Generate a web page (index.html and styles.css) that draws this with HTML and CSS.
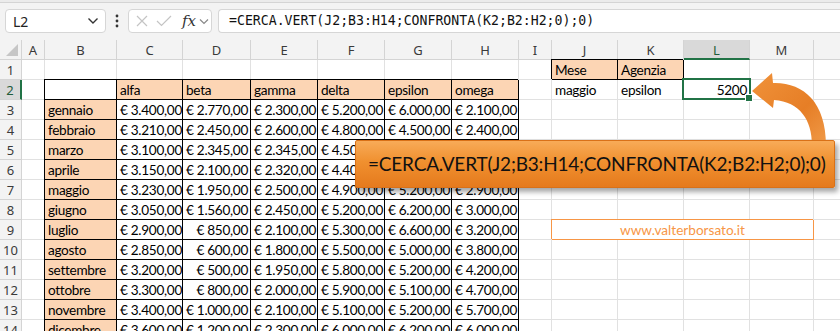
FILE: index.html
```html
<!DOCTYPE html>
<html lang="it">
<head>
    <meta charset="UTF-8" />
    <title>CERCA.VERT e CONFRONTA</title>
    <link rel="stylesheet" href="styles.css">
</head>
<body>
    <div class="topline"></div>
    <div class="formula-bar">
        <div class="name-box">
            <span>L2</span>
            <svg width="12" height="8" viewBox="0 0 12 8"><path d="M1.5 1.5 L6 6 L10.5 1.5" fill="none" stroke="#333" stroke-width="1.4"/></svg>
        </div>
        <div class="dots">
            <svg width="4" height="14" viewBox="0 0 4 14"><circle cx="2" cy="2" r="1.4" fill="#333"/><circle cx="2" cy="7" r="1.4" fill="#333"/><circle cx="2" cy="12" r="1.4" fill="#333"/></svg>
        </div>
        <div class="fx-box">
            <svg width="12" height="12" viewBox="0 0 12 12"><path d="M1 1 L11 11 M11 1 L1 11" stroke="#c4c4c4" stroke-width="1.2"/></svg>
            <svg width="16" height="12" viewBox="0 0 16 12"><path d="M1 6 L5.5 10.5 L15 1" fill="none" stroke="#c4c4c4" stroke-width="1.2"/></svg>
            <span class="fx">fx</span>
            <svg width="10" height="7" viewBox="0 0 10 7"><path d="M1 1.5 L5 5.5 L9 1.5" fill="none" stroke="#888" stroke-width="1.2"/></svg>
        </div>
        <div class="formula-input">=CERCA.VERT(J2;B3:H14;CONFRONTA(K2;B2:H2;0);0)</div>
    </div>

    <div class="sheet">
        <div class="grid" id="grid"></div>

        <!-- freccia curva verso L2 -->
        <svg class="arrow" width="840" height="120" viewBox="0 0 840 120">
            <defs>
                <linearGradient id="arrowFill" x1="0" y1="0" x2="1" y2="1">
                    <stop offset="0" stop-color="#f0923a"/>
                    <stop offset="0.6" stop-color="#e67e26"/>
                    <stop offset="1" stop-color="#f09a48"/>
                </linearGradient>
            </defs>
            <path d="M752 51 L772 33 L773 43 C803 42 826 62 826 105 L812 105 C812 80 800 62 774 60 L773 68 Z" fill="url(#arrowFill)"/>
        </svg>

        <div class="callout">=CERCA.VERT(J2;B3:H14;CONFRONTA(K2;B2:H2;0);0)</div>
    </div>

    <script>
        const cols = ['A', 'B', 'C', 'D', 'E', 'F', 'G', 'H', 'I', 'J', 'K', 'L', 'M', 'N'];
        const agencies = ['alfa', 'beta', 'gamma', 'delta', 'epsilon', 'omega'];
        const rows = [
            ['gennaio',   '3.400,00', '2.770,00', '2.300,00', '5.200,00', '6.000,00', '2.100,00'],
            ['febbraio',  '3.210,00', '2.450,00', '2.600,00', '4.800,00', '4.500,00', '2.400,00'],
            ['marzo',     '3.100,00', '2.345,00', '2.345,00', '4.500,00', '5.400,00', '2.600,00'],
            ['aprile',    '3.150,00', '2.100,00', '2.320,00', '4.400,00', '5.300,00', '2.700,00'],
            ['maggio',    '3.230,00', '1.950,00', '2.500,00', '4.900,00', '5.200,00', '2.900,00'],
            ['giugno',    '3.050,00', '1.560,00', '2.450,00', '5.200,00', '6.200,00', '3.000,00'],
            ['luglio',    '2.900,00', '850,00',   '2.100,00', '5.300,00', '6.600,00', '3.200,00'],
            ['agosto',    '2.850,00', '600,00',   '1.800,00', '5.500,00', '5.000,00', '3.800,00'],
            ['settembre', '3.200,00', '500,00',   '1.950,00', '5.800,00', '5.200,00', '4.200,00'],
            ['ottobre',   '3.300,00', '800,00',   '2.000,00', '5.900,00', '5.100,00', '4.700,00'],
            ['novembre',  '3.400,00', '1.000,00', '2.100,00', '5.100,00', '5.200,00', '5.700,00'],
            ['dicembre',  '3.600,00', '1.200,00', '2.300,00', '6.000,00', '6.200,00', '6.000,00']
        ];

        // contenuto delle celle: indirizzo -> [testo, classi]
        const sheet = {};
        sheet['B2'] = ['', 'boxed'];
        agencies.forEach((a, i) => { sheet[cols[i + 2] + '2'] = [a, 'boxed fill']; });
        rows.forEach((r, i) => {
            const n = i + 3;
            sheet['B' + n] = [r[0], 'boxed fill'];
            for (let k = 1; k < 7; k++) sheet[cols[k + 1] + n] = ['€ ' + r[k], 'boxed num'];
        });
        sheet['J1'] = ['Mese', 'boxed fill'];
        sheet['K1'] = ['Agenzia', 'boxed fill'];
        sheet['J2'] = ['maggio', ''];
        sheet['K2'] = ['epsilon', ''];
        sheet['L2'] = ['5200', 'num selected'];

        const grid = document.getElementById('grid');

        function addCell(text, cls) {
            const el = document.createElement('div');
            el.className = 'cell ' + cls;
            el.textContent = text;
            grid.appendChild(el);
            return el;
        }

        addCell('', 'corner');
        cols.forEach(c => addCell(c, 'col-head' + (c === 'L' ? ' active' : '')));

        for (let r = 1; r <= 14; r++) {
            addCell(r, 'row-head' + (r === 2 ? ' active' : ''));
            for (let i = 0; i < cols.length; i++) {
                if (r === 9 && cols[i] === 'J') {
                    addCell('www.valterborsato.it', 'link-box');
                    i += 3;
                    continue;
                }
                const v = sheet[cols[i] + r] || ['', ''];
                addCell(v[0], v[1]);
            }
        }
    </script>
</body>
</html>
```

FILE: styles.css
```css
body {
    margin: 0;
    width: 840px;
    height: 331px;
    overflow: hidden;
    background: #f3f3f3;
    font-family: "Noto Sans", sans-serif;
}
.topline {
    height: 2px;
    background: #ebebeb;
    border-bottom: 1px solid #d4d4d4;
}
.formula-bar {
    display: flex;
    align-items: flex-start;
    height: 37px;
    padding: 6px 0 0 5px;
    box-sizing: border-box;
}
.name-box {
    width: 101px;
    height: 24px;
    box-sizing: border-box;
    background: #fff;
    border: 1px solid #d6d6d6;
    border-radius: 4px;
    display: flex;
    align-items: center;
    justify-content: space-between;
    padding: 0 6px 0 7px;
    font-size: 14px;
    color: #222;
}
.dots {
    width: 22px;
    height: 24px;
    display: flex;
    align-items: center;
    justify-content: center;
}
.fx-box {
    width: 84px;
    height: 24px;
    box-sizing: border-box;
    background: #fff;
    border: 1px solid #d6d6d6;
    border-radius: 4px;
    display: flex;
    align-items: center;
    gap: 8px;
    padding: 0 0 0 7px;
}
.fx-box .fx {
    font-family: "DejaVu Serif", serif;
    font-style: italic;
    font-size: 15px;
    color: #333;
    margin-left: 2px;
    margin-right: -5px;
}
.formula-input {
    flex: 1;
    margin-left: 6px;
    height: 24px;
    box-sizing: border-box;
    background: #fff;
    border: 1px solid #d6d6d6;
    border-right: none;
    border-radius: 4px 0 0 4px;
    padding: 0 0 0 10px;
    font-family: "DejaVu Sans Mono", monospace;
    font-size: 13.2px;
    line-height: 22px;
    color: #111;
    white-space: nowrap;
}
.sheet {
    position: relative;
}
.grid {
    display: grid;
    grid-template-columns: 22px 23px 72px 66px 68px 67px 67px 67px 67px 33px 66px 66px 66px 64px 66px;
    grid-auto-rows: 20px;
    background: #fff;
}
.cell {
    box-sizing: border-box;
    border-right: 1px solid #e1e1e1;
    border-bottom: 1px solid #e1e1e1;
    padding: 0 3px;
    font-family: Lato, "Liberation Sans", sans-serif;
    font-size: 13.6px;
    letter-spacing: -0.3px;
    line-height: 20px;
    color: #000;
    white-space: nowrap;
    overflow: visible;
    background: #fff;
}
.corner,
.col-head,
.row-head {
    background: #f3f3f3;
    border-color: #d4d4d4;
    font-family: "Noto Sans", sans-serif;
    font-size: 13px;
    letter-spacing: 0;
    color: #3a3a3a;
    text-align: center;
    padding: 0;
}
.corner {
    position: relative;
}
.corner::after {
    content: "";
    position: absolute;
    right: 3px;
    bottom: 3px;
    border-left: 12px solid transparent;
    border-bottom: 12px solid #c6c6c6;
}
.col-head {
    line-height: 20px;
    border-bottom-color: #d4d4d4;
}
.col-head.active {
    background: #d9d9d9;
    border-bottom: 2px solid #217346;
    color: #1f5c3a;
}
.row-head.active {
    background: #d9d9d9;
    border-right: 2px solid #217346;
    color: #1f5c3a;
}
.boxed {
    border-right-color: #000;
    border-bottom-color: #000;
    box-shadow: -1px -1px 0 0 #000;
}
.fill {
    background: #fcd5b4;
}
.num {
    text-align: right;
    padding-right: 2px;
}
.selected {
    position: relative;
}
.selected::after {
    content: "";
    position: absolute;
    left: -2px;
    top: -2px;
    right: -2px;
    bottom: -1px;
    border: 2px solid #217346;
}
.selected::before {
    content: "";
    position: absolute;
    right: -4px;
    bottom: -3px;
    width: 6px;
    height: 6px;
    background: #217346;
    border: 1px solid #fff;
    z-index: 1;
}
.link-box {
    grid-column: span 4;
    border-right-color: #f79646;
    border-bottom-color: #f79646;
    box-shadow: -1px -1px 0 0 #f79646;
    text-align: center;
    color: #f79646;
    letter-spacing: 0;
}
.arrow {
    position: absolute;
    left: 0;
    top: 0;
}
.callout {
    position: absolute;
    left: 355px;
    top: 100px;
    width: 480px;
    height: 48px;
    box-sizing: border-box;
    padding-left: 12px;
    background: linear-gradient(#f8ab58, #f0902f 45%, #e57a1d);
    border: 1px solid #d97118;
    border-radius: 2px;
    box-shadow: 3px 4px 5px rgba(0, 0, 0, 0.35);
    font-family: Lato, "Liberation Sans", sans-serif;
    font-size: 19px;
    letter-spacing: -0.2px;
    line-height: 46px;
    color: #111;
    white-space: nowrap;
}
```
